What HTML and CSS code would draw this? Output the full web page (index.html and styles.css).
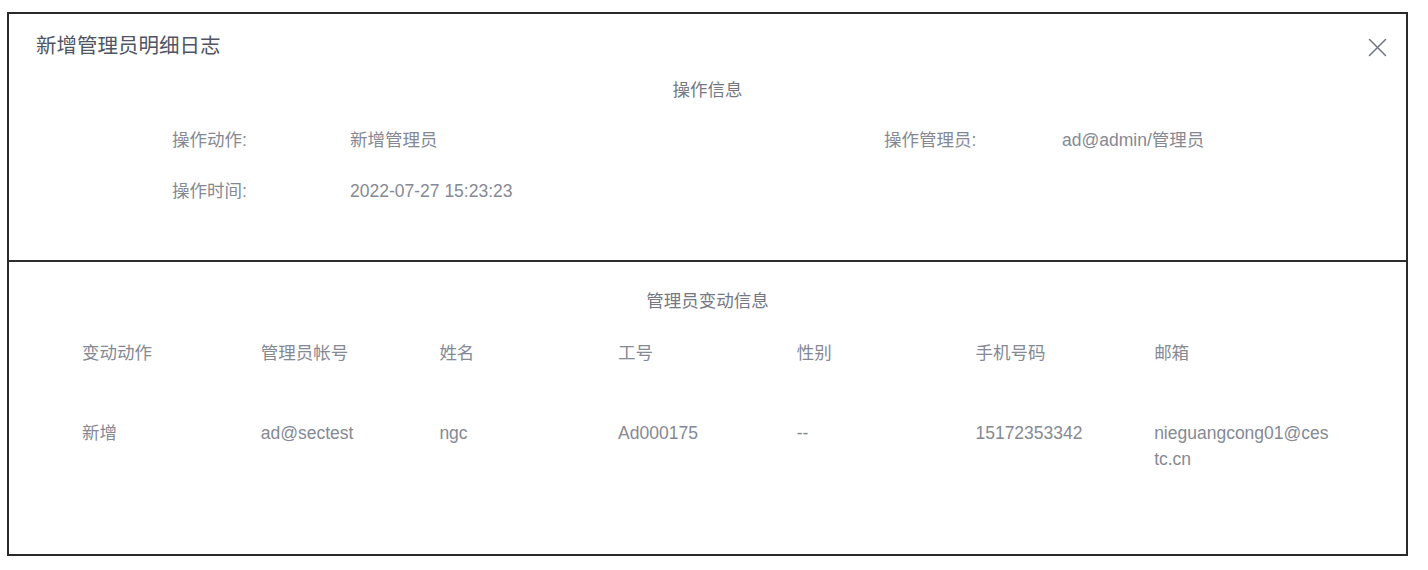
FILE: index.html
```html
<!DOCTYPE html>
<html lang="zh-CN">
<head>
<meta charset="utf-8">
<title>新增管理员明细日志</title>
<link rel="stylesheet" href="styles.css">
</head>
<body>
<div class="dialog">
  <section class="op-section">
    <div class="dialog-header">
      <span class="dialog-title">新增管理员明细日志</span>
      <span class="close-btn" aria-label="关闭">
        <svg width="19" height="19" viewBox="0 0 19 19"><path d="M1.5 1.5 L17.5 17.5 M17.5 1.5 L1.5 17.5" stroke="#6f7480" stroke-width="1.5" fill="none" stroke-linecap="round"/></svg>
      </span>
    </div>
    <div class="section-title">操作信息</div>
    <div class="info-grid">
      <div class="info-item"><span class="info-label">操作动作:</span><span class="info-value">新增管理员</span></div>
      <div class="info-item"><span class="info-label">操作管理员:</span><span class="info-value">ad@admin/管理员</span></div>
      <div class="info-item"><span class="info-label">操作时间:</span><span class="info-value">2022-07-27 15:23:23</span></div>
    </div>
  </section>
  <section class="change-section">
    <div class="section-title change-title">管理员变动信息</div>
    <div class="table">
      <div class="t-row t-head">
        <div class="cell">变动动作</div>
        <div class="cell">管理员帐号</div>
        <div class="cell">姓名</div>
        <div class="cell">工号</div>
        <div class="cell">性别</div>
        <div class="cell">手机号码</div>
        <div class="cell">邮箱</div>
      </div>
      <div class="t-row t-body">
        <div class="cell">新增</div>
        <div class="cell">ad@sectest</div>
        <div class="cell">ngc</div>
        <div class="cell">Ad000175</div>
        <div class="cell">--</div>
        <div class="cell">15172353342</div>
        <div class="cell">nieguangcong01@cestc.cn</div>
      </div>
    </div>
  </section>
</div>
</body>
</html>
```
FILE: styles.css
```css
* { box-sizing: border-box; }
html, body { margin: 0; padding: 0; background: #ffffff; }
body {
  font-family: "Liberation Sans", Arial, "Noto Sans CJK SC", sans-serif;
  color: #858994;
}
.dialog {
  margin: 12px 0 0 7px;
  width: 1401px;
  height: 544px;
  border: 2px solid #2a2a2a;
  background: #fff;
}
.op-section {
  height: 248px;
  border-bottom: 2px solid #2e2e2e;
}
.dialog-header {
  display: flex;
  justify-content: space-between;
  align-items: center;
  padding: 20px 19px 0 27px;
  height: 44px;
}
.dialog-title {
  font-size: 20.5px;
  line-height: 24px;
  color: #505564;
}
.close-btn {
  display: flex;
  width: 19px;
  height: 19px;
  margin-top: 2px;
}
.section-title {
  margin-top: 20px;
  text-align: center;
  font-size: 17.5px;
  line-height: 24px;
  color: #747884;
}
.info-grid {
  display: grid;
  grid-template-columns: 712px 1fr;
  row-gap: 27px;
  margin-top: 26px;
  padding-left: 163px;
}
.info-item {
  display: flex;
  font-size: 17.5px;
  line-height: 24px;
}
.info-label { width: 178px; flex: none; }
.info-value { color: #858994; }
.change-title { margin-top: 27px; }
.table {
  margin-top: 28px;
  padding-left: 73px;
}
.t-row {
  display: grid;
  grid-template-columns: repeat(7, 178.7px);
  font-size: 17.5px;
}
.t-head { line-height: 24px; }
.t-body { margin-top: 55px; line-height: 26px; }
.cell {
  word-break: break-all;
  padding-right: 2px;
}
```
